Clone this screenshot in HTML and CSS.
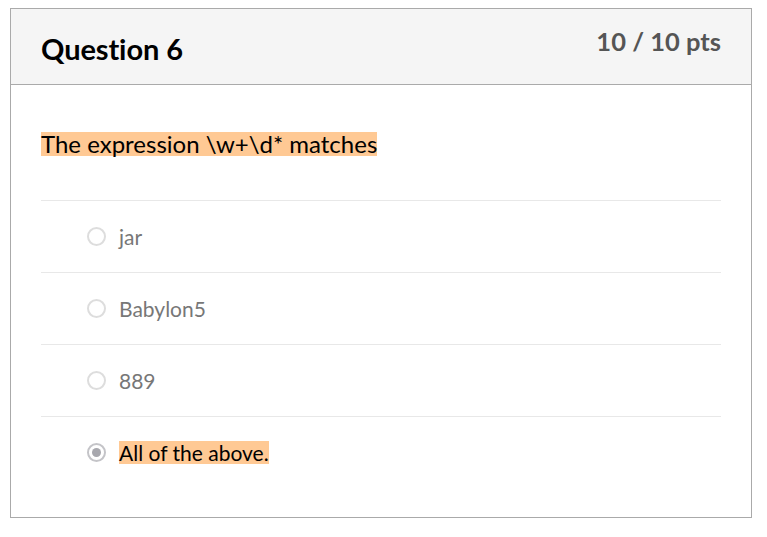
FILE: index.html
```html
<!DOCTYPE html>
<html>
<head>
<meta charset="utf-8">
<link rel="stylesheet" href="styles.css">
</head>
<body>
<div class="card">
  <div class="header">
    <h2 class="title">Question 6</h2>
    <div class="pts">10 / 10 pts</div>
  </div>
  <div class="body">
    <p class="question"><span class="hl">The expression \w+\d* matches</span></p>
    <div class="answers">
      <div class="answer"><span class="radio"></span><span class="label">jar</span></div>
      <div class="answer"><span class="radio"></span><span class="label">Babylon5</span></div>
      <div class="answer"><span class="radio"></span><span class="label">889</span></div>
      <div class="answer selected"><span class="radio checked"></span><span class="label hl">All of the above.</span></div>
    </div>
  </div>
</div>
</body>
</html>
```
FILE: styles.css
```css
html, body { margin: 0; padding: 0; background: #fff; }
body {
  padding: 8px 15px 0 10px;
  font-family: Lato, "Open Sans", sans-serif;
  color: #000;
}
.card {
  border: 1px solid #aaaaaa;
  height: 508px;
  box-sizing: content-box;
}
.header {
  background: #f5f5f5;
  border-bottom: 1px solid #aaaaaa;
  height: 75px;
  display: flex;
  justify-content: space-between;
  align-items: flex-start;
  padding: 0 30px;
}
.title {
  margin: 23px 0 0 0;
  font-size: 29px;
  font-weight: 700;
  line-height: 34px;
  letter-spacing: -0.1px;
}
.pts {
  margin-top: 17px;
  font-size: 25.5px;
  font-weight: 700;
  color: #555;
  line-height: 30px;
}
.body {
  padding: 0 30px;
}
.question {
  margin: 47px 0 0 0;
  font-size: 24px;
  line-height: 24px;
  height: 68px;
}
.hl { background: #ffc994; display: inline-block; }
.question .hl { line-height: 24px; }
.answers { display: flex; flex-direction: column; }
.answer {
  border-top: 1px solid #e8e8e8;
  height: 71px;
  display: flex;
  align-items: center;
  padding-left: 46px;
}
.radio {
  width: 15px;
  height: 15px;
  border: 2px solid #ddd;
  border-radius: 50%;
  margin-right: 13px;
  box-sizing: content-box;
  position: relative;
}
.radio.checked { border-color: #c4c4c8; }
.radio.checked::after {
  content: "";
  position: absolute;
  left: 3px; top: 3px;
  width: 9px; height: 9px;
  border-radius: 50%;
  background: #a8a8ae;
}
.label {
  font-size: 21px;
  color: #777;
  line-height: 23px;
}
.label.hl { color: #000; }
```
